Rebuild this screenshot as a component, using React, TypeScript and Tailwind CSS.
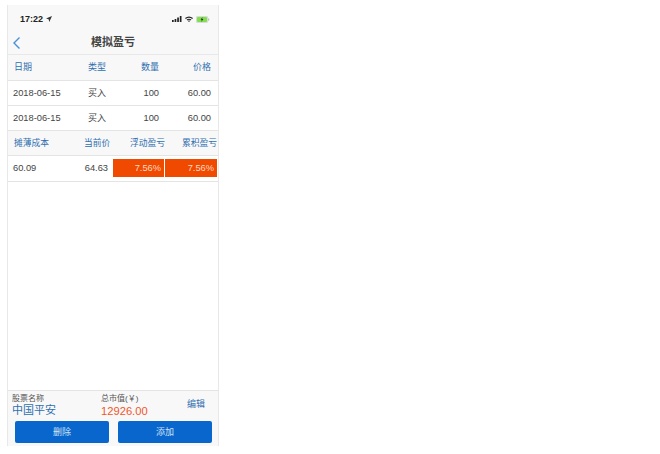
const FONT = "font-['Liberation_Sans','Noto_Sans_CJK_SC',sans-serif]";

const trades = [
  { date: "2018-06-15", type: "买入", qty: "100", price: "60.00" },
  { date: "2018-06-15", type: "买入", qty: "100", price: "60.00" },
];

function StatusBar() {
  return (
    <div className="h-[24px] flex items-end justify-between pl-[12px] pr-[8px] pb-[4px] bg-[#f8f8f8]">
      <div className="flex items-center gap-[3px] text-[9px] leading-[12px] font-bold text-[#222]">
        <span>17:22</span>
        <svg width="6" height="6" viewBox="0 0 6 6">
          <path d="M6 0 0 2.6l2.6.7L3.3 6z" fill="#333" />
        </svg>
      </div>
      <div className="flex items-center gap-[3px] h-[12px]">
        <svg width="10" height="6" viewBox="0 0 10 6">
          <rect x="0" y="4" width="1.7" height="2" fill="#222" />
          <rect x="2.6" y="3" width="1.7" height="3" fill="#222" />
          <rect x="5.2" y="1.5" width="1.7" height="4.5" fill="#222" />
          <rect x="7.8" y="0" width="1.7" height="6" fill="#222" />
        </svg>
        <svg width="8" height="6" viewBox="0 0 8 6">
          <path d="M0 2Q4-1 8 2L7.2 2.9Q4 .5.8 2.9z" fill="#222" />
          <path d="M1.6 3.6Q4 1.7 6.4 3.6L5.6 4.4Q4 3.2 2.4 4.4z" fill="#222" />
          <path d="M3 5 4 4.3 5 5 4 6z" fill="#222" />
        </svg>
        <svg width="14" height="7" viewBox="0 0 14 7">
          <rect x=".3" y=".3" width="11.4" height="6.4" rx="1.4" fill="none" stroke="#bbb" strokeWidth=".6" />
          <rect x="1" y="1" width="10" height="5" rx=".8" fill="#7fe04c" />
          <rect x="12.2" y="2.4" width="1" height="2.2" rx=".4" fill="#aaa" />
          <path d="M6.6 1 4.6 3.8h1.3L5.2 6l2.2-3H6.1z" fill="#222" />
        </svg>
      </div>
    </div>
  );
}

function NavBar() {
  return (
    <div className="relative h-[26px] flex items-center justify-center pt-[2px] bg-[#f8f8f8] border-b border-[#e8e8e8]">
      <svg className="absolute left-[4px] top-[7px]" width="9" height="14" viewBox="0 0 9 14">
        <path d="M7.5 1.5 2 7l5.5 5.5" fill="none" stroke="#4a90d9" strokeWidth="1.4" />
      </svg>
      <span className="text-[11px] font-bold text-[#444]">模拟盈亏</span>
    </div>
  );
}

function TradeTable() {
  return (
    <div>
      <div className="h-[26px] grid grid-cols-[60px_46px_39px_52px] items-center pl-[6px] pt-[1px] bg-[#f8f8f8] border-b border-[#e4e4e4] text-[9px] text-[#2f6fb0]">
        <span>日期</span>
        <span className="text-center">类型</span>
        <span className="text-right">数量</span>
        <span className="text-right">价格</span>
      </div>
      {trades.map((t, i) => (
        <div key={i} className="h-[25px] grid grid-cols-[61px_46px_39px_52px] items-center pl-[5px] pt-[1px] bg-white border-b border-[#e4e4e4] text-[9.3px] text-[#444]">
          <span>{t.date}</span>
          <span className="text-center text-[9px]">{t.type}</span>
          <span className="text-right">{t.qty}</span>
          <span className="text-right">{t.price}</span>
        </div>
      ))}
    </div>
  );
}

function SummaryTable() {
  return (
    <div>
      <div className="h-[25px] grid grid-cols-[70px_26px_55px_52px] items-center pl-[6px] pt-[1px] bg-[#f8f8f8] border-b border-[#e4e4e4] text-[8.75px] text-[#2f6fb0] whitespace-nowrap">
        <span>摊薄成本</span>
        <span className="text-right">当前价</span>
        <span className="text-right">浮动盈亏</span>
        <span className="text-right">累积盈亏</span>
      </div>
      <div className="h-[26px] flex items-center pl-[5px] bg-white border-b border-[#e4e4e4] text-[9.3px] text-[#444]">
        <span className="w-[55px]">60.09</span>
        <span className="w-[40px] text-right">64.63</span>
        <span className="ml-[5px] w-[51px] h-[18px] self-start mt-[3px] leading-[19px] pr-[3px] text-right bg-[#f04a00] text-[#ffd9c4]">7.56%</span>
        <span className="ml-[1px] w-[52px] h-[18px] self-start mt-[3px] leading-[19px] pr-[3px] text-right bg-[#f04a00] text-[#ffd9c4]">7.56%</span>
      </div>
    </div>
  );
}

function Footer() {
  return (
    <div className="h-[56px] bg-[#f8f8f8] border-t border-[#e4e4e4] flex flex-col">
      <div className="flex h-[30px] pl-[4px] pt-[3px]">
        <div className="w-[89px]">
          <div className="text-[8px] leading-[10px] text-[#555]">股票名称</div>
          <div className="text-[11px] leading-[13px] text-[#2f6fb0]">中国平安</div>
        </div>
        <div className="w-[86px]">
          <div className="text-[8px] leading-[10px] text-[#555]">总市值(￥)</div>
          <div className="text-[11.2px] leading-[14px] text-[#f0562a]">12926.00</div>
        </div>
        <span className="text-[9px] leading-[20px] text-[#2f6fb0]">编辑</span>
      </div>
      <div className="flex gap-[9px] pl-[7px]">
        <button className="w-[94px] h-[22px] pt-[1px] rounded-[2px] bg-[#0866cc] text-[9px] text-[#cfe2f5]">删除</button>
        <button className="w-[94px] h-[22px] pt-[1px] rounded-[2px] bg-[#0866cc] text-[9px] text-[#cfe2f5]">添加</button>
      </div>
    </div>
  );
}

export default function App() {
  return (
    <div className={`w-[660px] h-[454px] bg-white pt-[5px] pl-[7px] ${FONT}`}>
      <div className="w-[212px] h-[441px] flex flex-col border-x border-[#e8e8e8] bg-white overflow-hidden">
        <StatusBar />
        <NavBar />
        <TradeTable />
        <SummaryTable />
        <div className="flex-1 bg-white" />
        <Footer />
      </div>
    </div>
  );
}
